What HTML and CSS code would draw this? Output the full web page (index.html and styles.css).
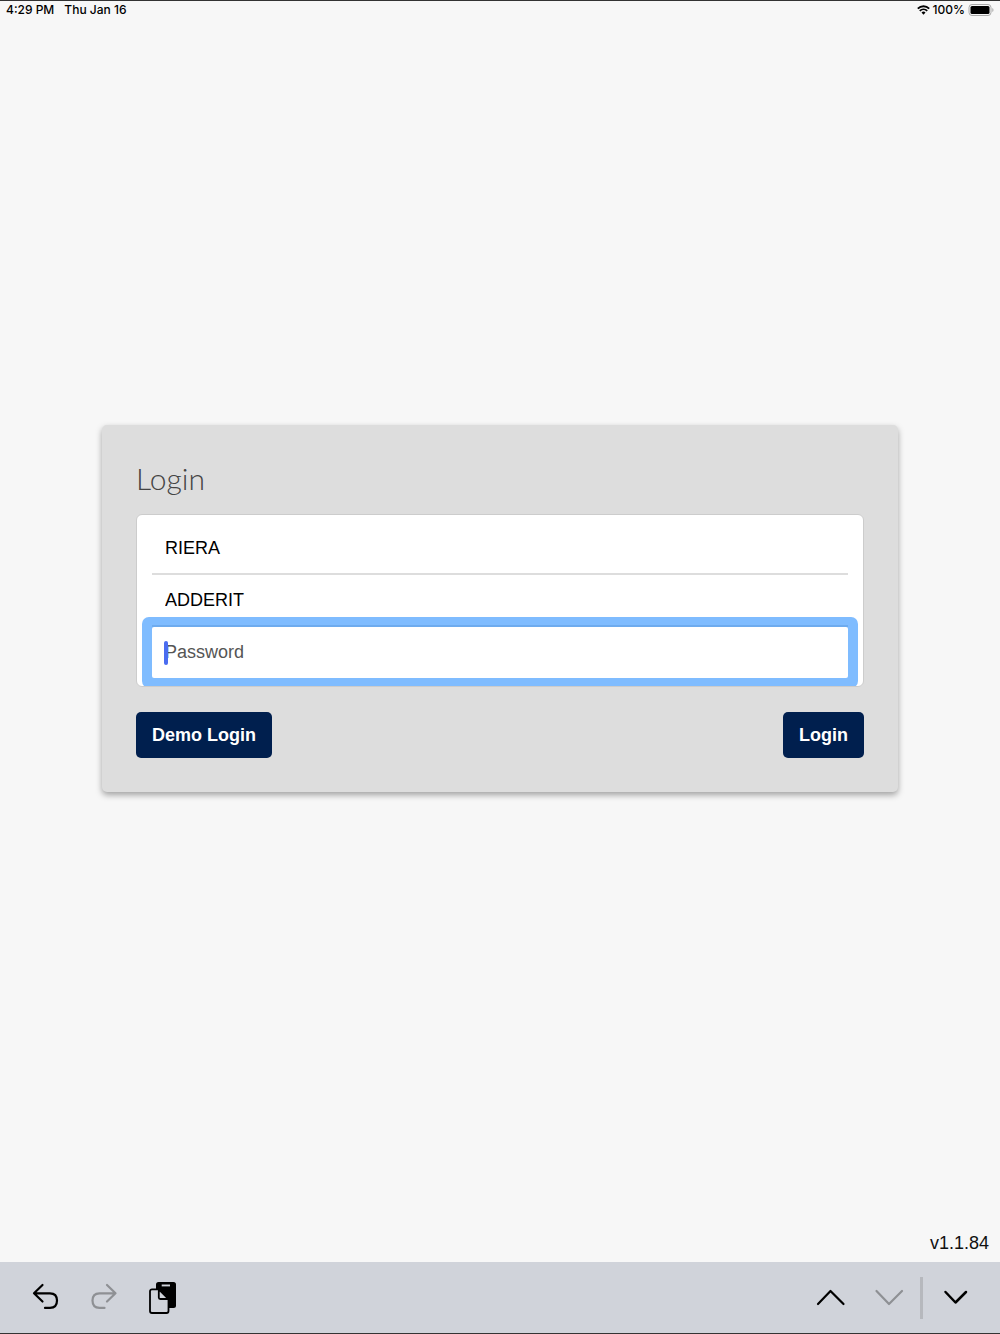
FILE: index.html
```html
<!DOCTYPE html>
<html lang="en">
<head>
  <meta charset="UTF-8">
  <meta name="viewport" content="width=device-width, initial-scale=1.0">
  <title>Login</title>
  <link rel="stylesheet" href="styles.css">
</head>
<body>
  <header class="status-bar">
    <span>4:29 PM</span>
    <span>Thu Jan 16</span>
    <div class="status-right">
      <svg width="13" height="10" viewBox="0 0 13 10" aria-hidden="true">
        <path d="M.8 3.600a8.200 8.200 0 0 1 11.400 0M2.800 5.900a5.300 5.300 0 0 1 7.400 0" fill="none" stroke="#000" stroke-width="1.9"/>
        <path d="M4.500 7.600a2.800 2.800 0 0 1 4 0L6.500 9.700z"/>
      </svg>
      <span>100%</span>
      <svg width="26" height="12" viewBox="0 0 26 12" aria-hidden="true">
        <rect x="1" y="0.5" width="22" height="11" rx="3" fill="none" stroke="#aaa"/>
        <rect x="2.500" y="2" width="19" height="8" rx="1.5"/>
        <path d="M24.300 4c1.600.6 1.600 3.400 0 4z" fill="#aaa"/>
      </svg>
    </div>
  </header>

  <main class="page">
    <form class="card">
      <h1>Login</h1>
      <div class="fields">
        <div class="field">
          <input type="text" value="RIERA" aria-label="Company">
        </div>
        <div class="field">
          <input type="text" value="ADDERIT" aria-label="Username">
        </div>
        <div class="field active">
          <input type="password" placeholder="Password" aria-label="Password">
          <span class="caret"></span>
        </div>
      </div>
      <div class="actions">
        <button type="button" class="btn">Demo Login</button>
        <button type="submit" class="btn">Login</button>
      </div>
    </form>
  </main>

  <div class="version">v1.1.84</div>

  <footer class="toolbar">
    <button type="button" aria-label="Undo">
      <svg width="32" height="35" viewBox="0 0 32 35"><path d="M12.500 5 4 13.300 12.500 21.500M4 13.300H20c5 0 7 3 7 7.300s-2 7.300-7 7.300h-5"/></svg>
    </button>
    <button type="button" aria-label="Redo" disabled>
      <svg width="32" height="35" viewBox="0 0 32 35"><path d="M19 5 27.500 13.300 19 21.500M27.500 13.300H11.500c-5 0-7 3-7 7.300s2 7.300 7 7.300h5"/></svg>
    </button>
    <button type="button" aria-label="Paste">
      <svg width="32" height="35" viewBox="0 0 32 35">
        <rect class="board" x="10" y="2" width="20" height="26" rx="2.500"/>
        <path class="paper" d="M15.700 4.500h8.300v1.900h-8.300z"/>
        <path class="page-icon" d="M12.800 9.300H6a2 2 0 0 0-2 2V31a2 2 0 0 0 2 2h14.500a2 2 0 0 0 2-2V18.800z"/>
        <path class="page-icon" d="M12.800 9.300V17.500a1.500 1.500 0 0 0 1.500 1.500h8.200z"/>
      </svg>
    </button>
    <div class="spacer"></div>
    <button type="button" aria-label="Previous field">
      <svg width="32" height="35" viewBox="0 0 32 35"><path d="M3 24 15.500 11 28.500 24"/></svg>
    </button>
    <button type="button" aria-label="Next field" disabled>
      <svg width="32" height="35" viewBox="0 0 32 35"><path d="M3.500 11 16 24 29 11"/></svg>
    </button>
    <div class="divider"></div>
    <button type="button" aria-label="Hide keyboard">
      <svg width="32" height="35" viewBox="0 0 32 35"><path d="M5.500 12 15.500 22.500 26 12" stroke-width="2.5"/></svg>
    </button>
  </footer>
</body>
</html>
```
FILE: styles.css
```css
* {
  box-sizing: border-box;
}

body {
  margin: 0;
  min-height: 100vh;
  display: flex;
  flex-direction: column;
  background-color: #f7f7f7;
  font-family: "Liberation Sans", Arial, sans-serif;
  font-size: 18px;
  color: #111;
}

.status-bar {
  display: flex;
  align-items: center;
  gap: 10px;
  height: 18px;
  padding: 0 6px;
  border-top: 1px solid #333;
  font-family: Inter, sans-serif;
  font-size: 12px;
  font-weight: 500;
  color: #000;
}

.status-right {
  display: flex;
  align-items: center;
  gap: 3px;
  margin-left: auto;
}

.page {
  flex: 1;
  display: flex;
  align-items: center;
  padding: 2px 102px 0;
}

.card {
  flex: 1;
  padding: 34px;
  background-color: #ddd;
  border-radius: 5px;
  box-shadow: 0 3px 6px rgba(0, 0, 0, 0.35);
}

h1 {
  margin: 0;
  height: 55px;
  font-family: Lato, sans-serif;
  font-size: 30px;
  font-weight: 300;
  line-height: 39px;
  color: #444;
}

.fields {
  padding: 8px 15px;
  overflow: hidden;
  background-color: #fff;
  border: 1px solid #ccc;
  border-radius: 6px;
}

.field {
  position: relative;
  border-bottom: 2px solid #ddd;
}

.field input {
  display: block;
  width: 100%;
  height: 50px;
  padding: 0 13px;
  border: none;
  outline: none;
  background: none;
  font: inherit;
  color: #000;
}

.field input::placeholder {
  color: #555;
  opacity: 1;
}

.field.active {
  border-bottom: none;
  border-radius: 2px;
  box-shadow: 0 0 0 10px rgba(0, 122, 255, 0.5);
}

.field.active input {
  height: 51px;
}

/* text cursor */
.caret {
  position: absolute;
  left: 12px;
  top: 14px;
  width: 4px;
  height: 24px;
  border-radius: 2px;
  background-color: #4a6cf0;
}

.actions {
  display: flex;
  justify-content: space-between;
  margin-top: 25px;
}

.btn {
  height: 46px;
  padding: 0 16px;
  border: none;
  border-radius: 5px;
  background-color: #001f4e;
  color: #fff;
  font: inherit;
  font-weight: bold;
}

.version {
  padding: 35px 11px 8px;
  line-height: 22px;
  text-align: right;
}

.toolbar {
  display: flex;
  align-items: center;
  height: 72px;
  padding: 0 15px 0 17px;
  background-color: #d0d3da;
  border-bottom: 1px solid #333;
}

.toolbar button {
  display: flex;
  justify-content: center;
  width: 58px;
  padding: 0;
  border: none;
  background: none;
  color: #000;
}

.toolbar button:disabled {
  color: #8e9094;
}

.toolbar svg {
  fill: none;
  stroke: currentColor;
  stroke-width: 2.2;
  stroke-linecap: round;
  stroke-linejoin: round;
}

.toolbar .board {
  fill: #000;
  stroke: none;
}

.toolbar .paper {
  fill: #d0d3da;
  stroke: none;
}

.toolbar .page-icon {
  fill: #d0d3da;
  stroke-width: 1.8;
}

.spacer {
  flex: 1;
}

.divider {
  width: 3px;
  height: 42px;
  margin: 0 4px 0 2px;
  background-color: #b6b8bd;
}
```
